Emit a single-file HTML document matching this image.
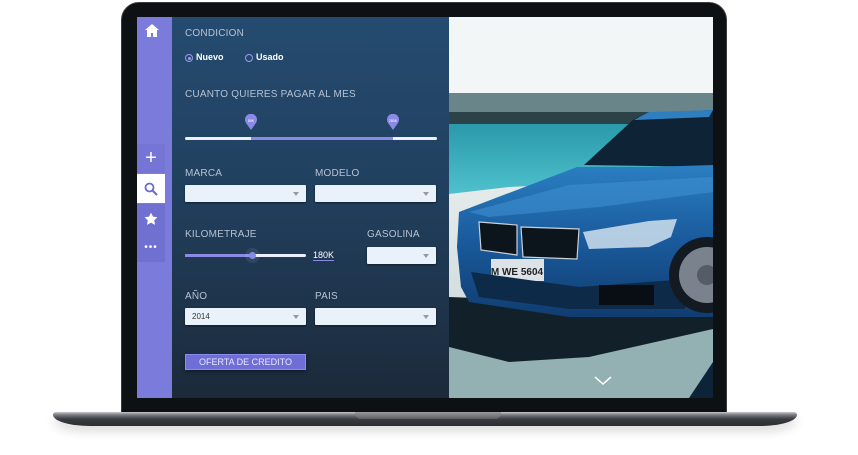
<!DOCTYPE html>
<html><head><meta charset="utf-8"><style>
*{margin:0;padding:0;box-sizing:border-box}
body{width:858px;height:455px;background:#fff;position:relative;overflow:hidden;font-family:"Liberation Sans",sans-serif}
.bezel{position:absolute;left:121px;top:2px;width:606px;height:414px;background:#0d1113;border-radius:18px 18px 4px 4px;border:1px solid #3a3d40}
.screen{position:absolute;left:137px;top:17px;width:576px;height:381px;overflow:hidden}
.side{position:absolute;left:0;top:0;width:35px;height:381px;background:#7b7bdb}
.form{position:absolute;left:35px;top:0;width:277px;height:381px;background:linear-gradient(180deg,#254b70 0%,#21405f 45%,#1c2a3a 100%)}
.photo{position:absolute;left:312px;top:0;width:264px;height:381px;overflow:hidden}
.lbl{position:absolute;color:#b6c2d3;font-size:10px;letter-spacing:.2px}
.sel{position:absolute;height:17px;background:#e9f1fb;border-radius:1px;box-shadow:0 1px 2px #0008;font-size:8px;color:#333;padding:4px 7px}
.sel:after{content:"";position:absolute;right:7px;top:7px;border:3px solid transparent;border-top:4px solid #999}
.ic{position:absolute;left:0;width:28px;height:29px;background:#7070d0;display:flex;align-items:center;justify-content:center;color:#fff}
.base{position:absolute;left:53px;top:412px;width:744px;height:14px;background:linear-gradient(180deg,#c8c8cc 0%,#7a7b80 20%,#3a3c42 50%,#2a2c30 100%);border-radius:3px 3px 40px 40px/3px 3px 12px 12px;box-shadow:0 6px 10px #0002}
.notch{position:absolute;left:355px;top:412px;width:146px;height:7px;background:linear-gradient(180deg,#9a9a9e,#5e5e62);border-radius:0 0 6px 6px}
</style></head><body>
<div class="bezel"></div>
<div class="screen">
 <div class="side">
  <svg style="position:absolute;left:8px;top:7px" width="14" height="13" viewBox="0 0 14 13"><path d="M7 0L0 6h2v7h4V9h2v4h4V6h2z" fill="#fff"/></svg>
  <div class="ic" style="top:127px;background:#7575d6;font-size:20px;font-weight:300">+</div>
  <div class="ic" style="top:157px;background:#fff"><svg width="14" height="14" viewBox="0 0 14 14"><circle cx="5.5" cy="5.5" r="4" fill="none" stroke="#6a6ad0" stroke-width="1.8"/><path d="M8.5 8.5L13 13" stroke="#6a6ad0" stroke-width="2"/></svg></div>
  <div class="ic" style="top:187px"><svg width="14" height="14" viewBox="0 0 24 24"><path d="M12 1l3.4 7 7.6 1-5.5 5.3 1.3 7.7L12 18.3 5.2 22l1.3-7.7L1 9l7.6-1z" fill="#fff"/></svg></div>
  <div class="ic" style="top:216px;font-size:10px;letter-spacing:1px">•••</div>
 </div>
 <div class="form">
  <div class="lbl" style="left:13px;top:11px">CONDICION</div>
  <div style="position:absolute;left:13px;top:37px;width:8px;height:8px;border:1px solid #9a9af0;border-radius:50%"><div style="margin:1.5px;width:3px;height:3px;background:#9a9af0;border-radius:50%"></div></div>
  <div style="position:absolute;left:24px;top:35px;color:#fff;font-size:9px;font-weight:bold">Nuevo</div>
  <div style="position:absolute;left:73px;top:37px;width:8px;height:8px;border:1px solid #9a9af0;border-radius:50%"></div>
  <div style="position:absolute;left:84px;top:35px;color:#fff;font-size:9px;font-weight:bold">Usado</div>
  <div class="lbl" style="left:13px;top:72px">CUANTO QUIERES PAGAR AL MES</div>
  <div style="position:absolute;left:13px;top:120px;width:252px;height:3px;background:#eef;border-radius:2px"></div>
  <div style="position:absolute;left:79px;top:120px;width:142px;height:3px;background:#8a8ae6"></div>
  <svg style="position:absolute;left:73px;top:97px" width="12" height="16" viewBox="0 0 12 16"><path d="M6 16L1 9A6 6 0 1 1 11 9z" fill="#8a8ae6"/><text x="6" y="8" font-size="3.5" fill="#fff" text-anchor="middle" font-family="Liberation Sans">80K</text></svg>
  <svg style="position:absolute;left:215px;top:97px" width="12" height="16" viewBox="0 0 12 16"><path d="M6 16L1 9A6 6 0 1 1 11 9z" fill="#8a8ae6"/><text x="6" y="8" font-size="3.5" fill="#fff" text-anchor="middle" font-family="Liberation Sans">280K</text></svg>
  <div class="lbl" style="left:13px;top:151px">MARCA</div>
  <div class="lbl" style="left:143px;top:151px">MODELO</div>
  <div class="sel" style="left:13px;top:168px;width:121px"></div>
  <div class="sel" style="left:143px;top:168px;width:121px"></div>
  <div class="lbl" style="left:13px;top:212px">KILOMETRAJE</div>
  <div class="lbl" style="left:195px;top:212px">GASOLINA</div>
  <div style="position:absolute;left:13px;top:237px;width:121px;height:3px;background:#eef;border-radius:2px"></div>
  <div style="position:absolute;left:13px;top:237px;width:67px;height:3px;background:#8a8ae6"></div>
  <div style="position:absolute;left:73px;top:231px;width:15px;height:15px;border-radius:50%;background:#ffffff14"></div>
  <div style="position:absolute;left:77px;top:235px;width:7px;height:7px;border-radius:50%;background:#8a8ae6"></div>
  <div style="position:absolute;left:141px;top:233px;color:#fff;font-size:9px;border-bottom:1px solid #8a8ae6">180K</div>
  <div class="sel" style="left:195px;top:230px;width:69px"></div>
  <div class="lbl" style="left:13px;top:274px">AÑO</div>
  <div class="lbl" style="left:143px;top:274px">PAIS</div>
  <div class="sel" style="left:13px;top:291px;width:121px">2014</div>
  <div class="sel" style="left:143px;top:291px;width:121px"></div>
  <div style="position:absolute;left:13px;top:337px;width:121px;height:16px;background:#6e6ed6;border:1px solid #8c8cf0;color:#e8e8ff;font-size:9px;text-align:center;line-height:14px;box-shadow:0 2px 4px #0006">OFERTA DE CREDITO</div>
 </div>
 <div class="photo">
  <svg width="264" height="381" viewBox="0 0 264 381">
   <defs>
    <linearGradient id="sea" x1="0" y1="0" x2="0" y2="1"><stop offset="0" stop-color="#2a9aab"/><stop offset="1" stop-color="#4fc0cc"/></linearGradient>
    <linearGradient id="pave" x1="0" y1="0" x2="0" y2="1"><stop offset="0" stop-color="#e6ecec"/><stop offset="1" stop-color="#c5d3d4"/></linearGradient>
    <linearGradient id="body" x1="0" y1="0" x2="0" y2="1"><stop offset="0" stop-color="#2a7fc2"/><stop offset=".5" stop-color="#1a5a9c"/><stop offset="1" stop-color="#103d70"/></linearGradient>
   </defs>
   <rect width="264" height="77" fill="#f3f6f6"/>
   <rect y="76" width="264" height="31" fill="#6a8589"/>
   <rect y="95" width="264" height="12" fill="#2a4248"/>
   <rect y="107" width="264" height="70" fill="url(#sea)"/>
   <path d="M0 177L60 170L264 160V381H0z" fill="url(#pave)"/>
   <path d="M0 330L264 300V381H0z" fill="#93b0b3"/>
   <path d="M0 280L264 290V312L140 340L60 345L0 330z" fill="#12202a"/>
   <path d="M240 381L264 345V381z" fill="#0d2438"/>
   <!-- car -->
   <path d="M135 148L185 102L200 96L264 93V150Z" fill="#0e2436"/>
   <path d="M264 93L200 95L185 103L260 100Z" fill="#2f7fc0"/>
   <path d="M128 150L10 195L8 230L12 270L20 285L120 300L230 300L264 300V148L200 150Z" fill="url(#body)"/>
   <path d="M20 195L120 168L264 160V175L150 190L40 200Z" fill="#3d8fd0" opacity=".6"/>
   <path d="M30 205L68 208L68 238L32 233Z" fill="#0c141c" stroke="#c8d0d8" stroke-width="1.2"/>
   <path d="M72 210L130 212L128 242L74 240Z" fill="#0c141c" stroke="#c8d0d8" stroke-width="1.2"/>
   <path d="M134 215L200 204L228 202L222 220L200 230L140 232Z" fill="#cfe0ee" opacity=".85"/>
   <rect x="42" y="242" width="53" height="22" fill="#dde2e8"/>
   <text x="68" y="258" font-size="10" text-anchor="middle" fill="#222" font-family="Liberation Sans" font-weight="bold">M WE 5604</text>
   <path d="M22 255L130 270L240 262L236 292L120 292L30 280Z" fill="#0d2a48"/>
   <rect x="150" y="268" width="55" height="20" fill="#080e14"/>
   <circle cx="258" cy="258" r="38" fill="#141a22"/><circle cx="258" cy="258" r="28" fill="#7a838d"/><circle cx="258" cy="258" r="10" fill="#555c66"/>
   <path d="M146 360l8 7 8-7" fill="none" stroke="#fff" stroke-width="1.5"/>
  </svg>
 </div>
</div>
<div class="base"></div><div class="notch"></div>
</body></html>
